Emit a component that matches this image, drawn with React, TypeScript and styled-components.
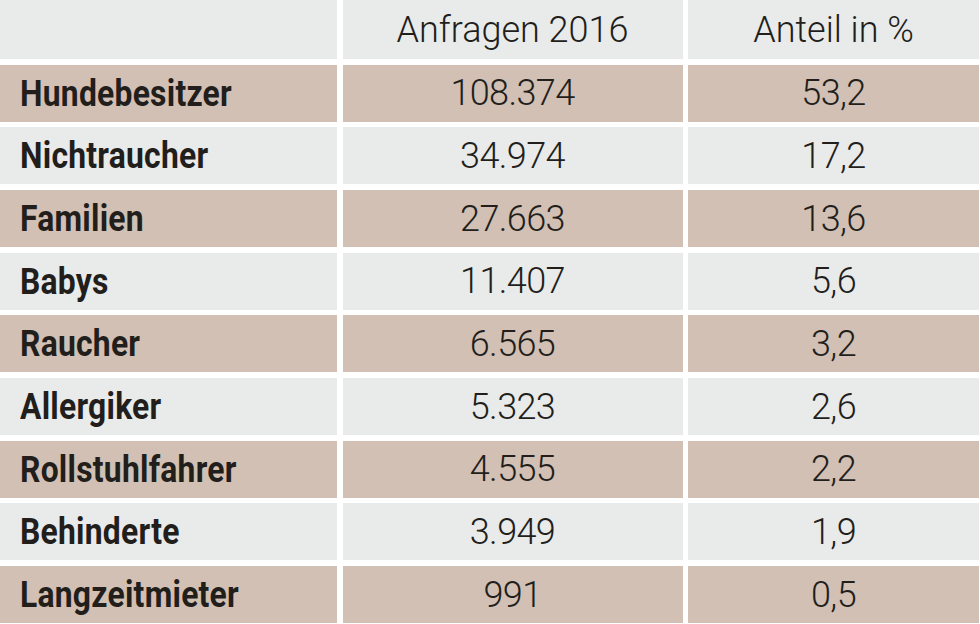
import styled, { createGlobalStyle } from "styled-components";

const GlobalStyle = createGlobalStyle`
  html, body {
    margin: 0;
    padding: 0;
    background: #ffffff;
  }
`;

const rows = [
  { label: "Hundebesitzer", count: "108.374", share: "53,2" },
  { label: "Nichtraucher", count: "34.974", share: "17,2" },
  { label: "Familien", count: "27.663", share: "13,6" },
  { label: "Babys", count: "11.407", share: "5,6" },
  { label: "Raucher", count: "6.565", share: "3,2" },
  { label: "Allergiker", count: "5.323", share: "2,6" },
  { label: "Rollstuhlfahrer", count: "4.555", share: "2,2" },
  { label: "Behinderte", count: "3.949", share: "1,9" },
  { label: "Langzeitmieter", count: "991", share: "0,5" },
];

const Table = styled.div`
  width: 980px;
  height: 624px;
  padding: 0 1px 1px 0;
  box-sizing: border-box;
  display: grid;
  grid-template-columns: 337px 340px 1fr;
  grid-template-rows: 59px repeat(9, 1fr);
  column-gap: 5.5px;
  row-gap: 5.8px;
  background: #ffffff;
`;

const Cell = styled.div<{ $tan: boolean }>`
  display: flex;
  align-items: center;
  justify-content: center;
  background: ${(p) => (p.$tan ? "#d1c0b3" : "#e9eaea")};
  color: #221e1b;
  font-family: Roboto, "Liberation Sans", sans-serif;
  font-weight: 300;
  font-size: 36px;
  letter-spacing: -0.6px;
`;

const HeadCell = styled(Cell)`
  letter-spacing: 0;
`;

const LabelCell = styled(Cell)`
  justify-content: flex-start;
  padding-left: 20px;
`;

// condensed bold label: no condensed face installed, so squeeze Roboto Bold
const Label = styled.span`
  display: inline-block;
  font-family: Roboto, "Liberation Sans", sans-serif;
  font-weight: 700;
  font-size: 37px;
  letter-spacing: 0.3px;
  transform: scaleX(0.86);
  transform-origin: left center;
  white-space: nowrap;
`;

const App = () => {
  return (
    <>
      <GlobalStyle />
      <Table>
        <LabelCell $tan={false} />
        <HeadCell $tan={false}>Anfragen 2016</HeadCell>
        <HeadCell $tan={false}>Anteil in %</HeadCell>
        {rows.map((r, i) => (
          <>
            <LabelCell key={r.label} $tan={i % 2 === 0}>
              <Label>{r.label}</Label>
            </LabelCell>
            <Cell $tan={i % 2 === 0}>{r.count}</Cell>
            <Cell $tan={i % 2 === 0}>{r.share}</Cell>
          </>
        ))}
      </Table>
    </>
  );
};

export default App;
